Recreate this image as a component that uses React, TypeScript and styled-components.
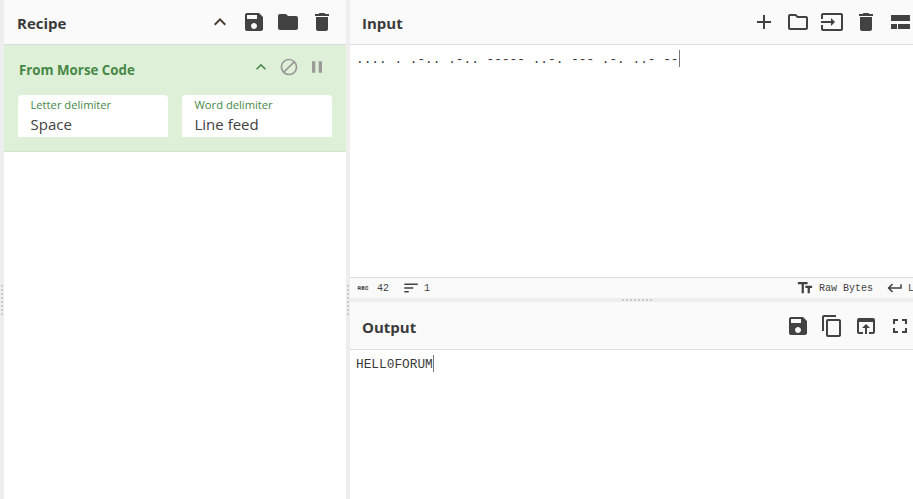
import React from "react";
import styled, { createGlobalStyle } from "styled-components";
import {
  MdKeyboardArrowUp, MdSave, MdFolder, MdDelete, MdBlock, MdPause, MdAdd, MdOutlineFolder, MdInput,
  MdContentCopy, MdOpenInBrowser, MdFullscreen, MdTextFields, MdKeyboardReturn, MdSort, MdAbc,
} from "react-icons/md";

const Global = createGlobalStyle`
  html, body { margin: 0; padding: 0; height: 100%; overflow: hidden; background: #fff; }
  #root { height: 100%; }
`;

const Page = styled.div`
  width: 913px; height: 499px; display: flex; overflow: hidden; background: #eee;
  font-family: "Open Sans", "Noto Sans", sans-serif; color: #3a3a3a;
`;
const Gutter = styled.div`
  flex: none; width: 4px; background: #eee; box-sizing: border-box; padding-top: 285px;
  display: flex; flex-direction: column; align-items: center;
`;
const GripV = styled.div`
  width: 2px; height: 32px;
  background-image: repeating-linear-gradient(to bottom, #ccc 0 2px, transparent 2px 4px);
`;
const GripH = styled.div`
  width: 32px; height: 2px;
  background-image: repeating-linear-gradient(to right, #ccc 0 2px, transparent 2px 4px);
`;
const RecipePane = styled.section`
  flex: none; width: 342px; background: #fff; display: flex; flex-direction: column;
`;
const Right = styled.div`
  flex: none; width: 576px; display: flex; flex-direction: column; min-width: 0;
`;
const Header = styled.header<{ $h: number }>`
  flex: none; height: ${p => p.$h}px; box-sizing: border-box; background: #fafafa;
  border-bottom: 1px solid #ddd; display: flex; align-items: center; justify-content: space-between;
`;
const Title = styled.h2<{ $left: number; $top?: number }>`
  margin: ${p => p.$top ?? 1}px 0 0 ${p => p.$left}px; font-size: 15px; font-weight: 700; color: #3a3a3a; line-height: 20px;
`;
const Tools = styled.div<{ $pr: number }>`
  display: flex; align-items: center; gap: 10px; padding-right: ${p => p.$pr}px; color: #424242;
  flex: none;
  svg { display: block; flex: none; }
`;
const Op = styled.div`
  flex: none; height: 107px; box-sizing: border-box; background: #dff0d8; border-bottom: 1px solid #d3e6cb;
  padding: 0 14px; display: flex; flex-direction: column;
`;
const OpTop = styled.div`
  height: 50px; display: flex; align-items: center; justify-content: space-between;
`;
const OpName = styled.div`
  font-size: 13.3px; font-weight: 700; color: #468847; margin-left: 1px;
`;
const OpTools = styled.div`
  display: flex; align-items: center; gap: 8px; margin-top: -6px; margin-right: 5px;
  svg { display: block; }
`;
const Ingredients = styled.div`
  display: flex; gap: 14px;
`;
const Field = styled.div`
  flex: 1; height: 42px; background: #fff; border-radius: 4px 4px 0 0; padding: 2px 0 0 12.5px; box-sizing: border-box;
`;
const FieldLabel = styled.div`
  font-size: 11.2px; line-height: 16px; color: #468847;
`;
const FieldValue = styled.div`
  font-size: 15px; line-height: 20px; color: #424242; margin-top: 1px;
`;
const Editor = styled.div<{ $top: number; $h?: number }>`
  flex: ${p => (p.$h ? "none" : "1")}; height: ${p => (p.$h ? `${p.$h}px` : "auto")}; min-height: 0;
  box-sizing: border-box; background: #fff; padding: ${p => p.$top}px 0 0 6px;
  font-family: "Liberation Mono", monospace; font-size: 12.8px; line-height: 16px; color: #3a3a3a; white-space: pre;
`;
const Caret = styled.span`
  display: inline-block; width: 1px; height: 17px; background: #777; vertical-align: -4px;
`;
const Status = styled.footer`
  flex: none; height: 21px; box-sizing: border-box; background: #fafafa; border-top: 1px solid #ddd;
  display: flex; align-items: center; justify-content: space-between; overflow: hidden;
  font-family: "Liberation Mono", monospace; font-size: 10px; color: #424242;
`;
const StatusGroup = styled.div<{ $pr?: number }>`
  display: flex; align-items: center; flex: none; padding-right: ${p => p.$pr ?? 0}px;
  svg { display: block; flex: none; }
`;
const StatusText = styled.span<{ $ml?: number }>`
  margin-left: ${p => p.$ml ?? 0}px;
`;
const HDivider = styled.div`
  flex: none; height: 4px; background: #eee; display: flex; align-items: center; justify-content: center;
`;

const LayoutIcon = () => (
  <svg width="24" height="24" viewBox="0 0 24 24" fill="currentColor">
    <path d="M3 19h6v-5H3v5zm7 0h12v-5H10v5zM3 5v6h19V5H3z" />
  </svg>
);

export default function App() {
  return (
    <Page>
      <Global />
      <Gutter><GripV /></Gutter>
      <RecipePane>
        <Header $h={45}>
          <Title $left={13}>Recipe</Title>
          <Tools $pr={12}>
            <MdKeyboardArrowUp size={24} color="#4a3b2f" />
            <MdSave size={24} />
            <MdFolder size={24} />
            <MdDelete size={24} />
          </Tools>
        </Header>
        <Op>
          <OpTop>
            <OpName>From Morse Code</OpName>
            <OpTools>
              <MdKeyboardArrowUp size={20} color="#468847" />
              <MdBlock size={20} color="#9a9a9a" />
              <MdPause size={20} color="#9a9a9a" />
            </OpTools>
          </OpTop>
          <Ingredients>
            <Field><FieldLabel>Letter delimiter</FieldLabel><FieldValue>Space</FieldValue></Field>
            <Field><FieldLabel>Word delimiter</FieldLabel><FieldValue>Line feed</FieldValue></Field>
          </Ingredients>
        </Op>
      </RecipePane>
      <Gutter><GripV /></Gutter>
      <Right>
        <Header $h={45}>
          <Title $left={12}>Input</Title>
          <Tools $pr={14}>
            <MdAdd size={24} />
            <MdOutlineFolder size={24} />
            <MdInput size={24} />
            <MdDelete size={24} />
            <LayoutIcon />
          </Tools>
        </Header>
        <Editor $top={5} $h={232}>.... . .-.. .-.. ----- ..-. --- .-. ..- --<Caret /></Editor>
        <Status>
          <StatusGroup>
            <MdAbc size={14} style={{ marginLeft: 6 }} />
            <StatusText $ml={7}>42</StatusText>
            <MdSort size={18} style={{ marginLeft: 13 }} />
            <StatusText $ml={4}>1</StatusText>
          </StatusGroup>
          <StatusGroup $pr={6}>
            <MdTextFields size={18} />
            <StatusText $ml={5}>Raw Bytes</StatusText>
            <MdKeyboardReturn size={18} style={{ marginLeft: 13 }} />
            <StatusText $ml={4}>LF</StatusText>
          </StatusGroup>
        </Status>
        <HDivider><GripH /></HDivider>
        <Header $h={48}>
          <Title $left={12} $top={2}>Output</Title>
          <Tools $pr={14}>
            <MdSave size={24} />
            <MdContentCopy size={24} />
            <MdOpenInBrowser size={24} />
            <MdFullscreen size={24} />
          </Tools>
        </Header>
        <Editor $top={5}>HELL0FORUM<Caret /></Editor>
      </Right>
    </Page>
  );
}
